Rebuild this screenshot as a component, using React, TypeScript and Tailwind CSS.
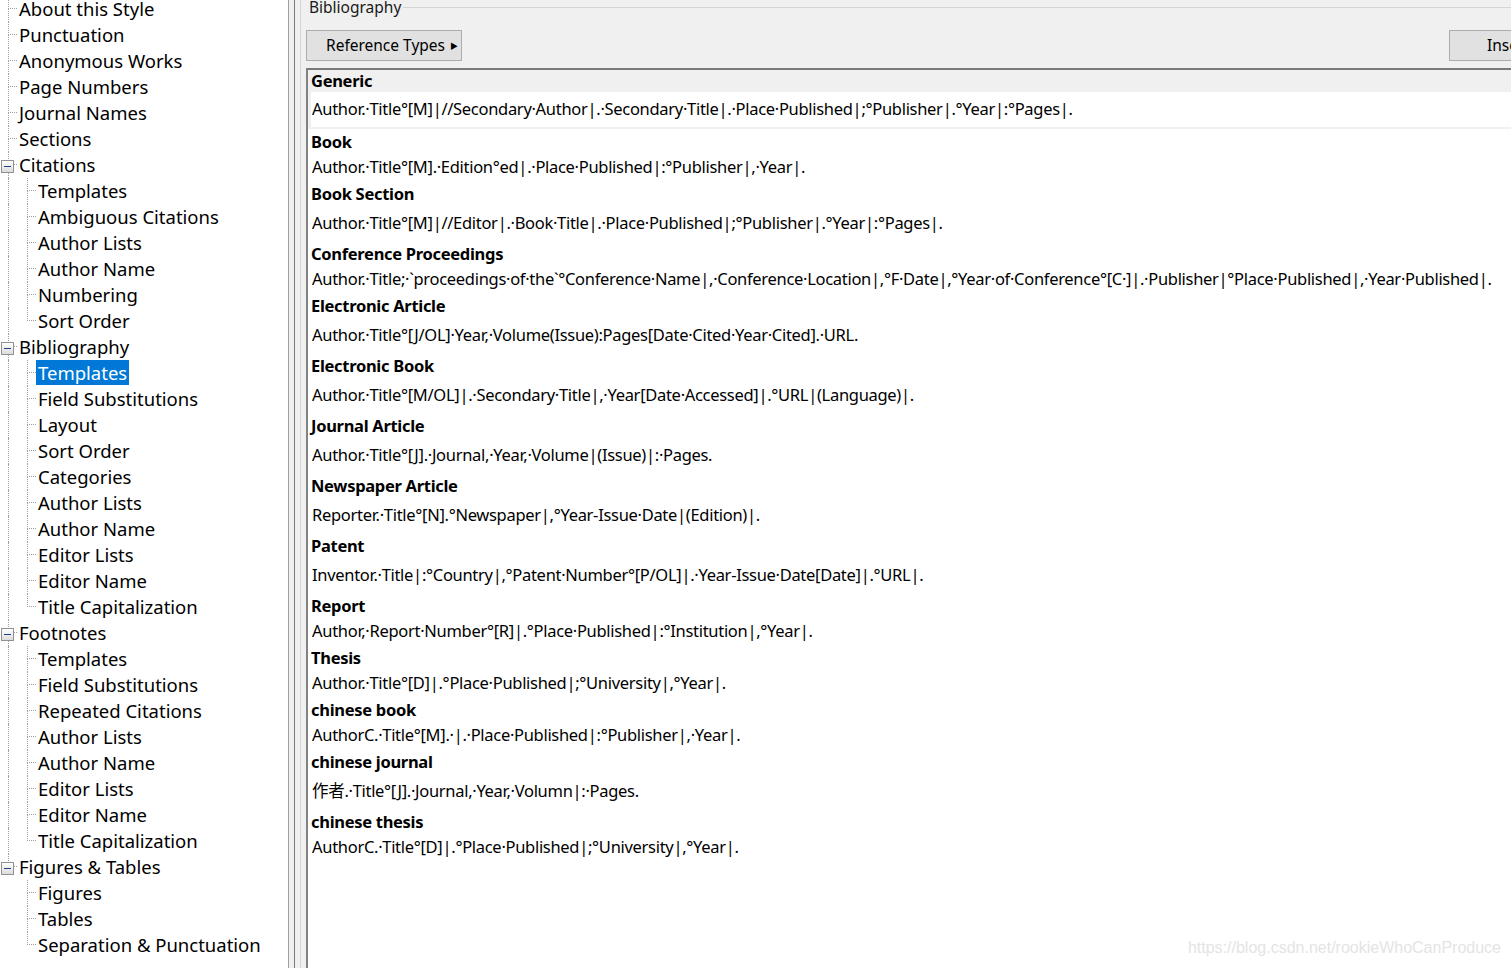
import React from "react";

type Node = { label: string; children?: string[]; selected?: number };

const tree: Node[] = [
  { label: "About this Style" },
  { label: "Punctuation" },
  { label: "Anonymous Works" },
  { label: "Page Numbers" },
  { label: "Journal Names" },
  { label: "Sections" },
  {
    label: "Citations",
    children: ["Templates", "Ambiguous Citations", "Author Lists", "Author Name", "Numbering", "Sort Order"],
  },
  {
    label: "Bibliography",
    selected: 0,
    children: [
      "Templates",
      "Field Substitutions",
      "Layout",
      "Sort Order",
      "Categories",
      "Author Lists",
      "Author Name",
      "Editor Lists",
      "Editor Name",
      "Title Capitalization",
    ],
  },
  {
    label: "Footnotes",
    children: [
      "Templates",
      "Field Substitutions",
      "Repeated Citations",
      "Author Lists",
      "Author Name",
      "Editor Lists",
      "Editor Name",
      "Title Capitalization",
    ],
  },
  { label: "Figures & Tables", children: ["Figures", "Tables", "Separation & Punctuation"] },
];

// tall = 60px entry, otherwise 52px
const templates: { name: string; text: string; tall?: boolean }[] = [
  { name: "Book", text: "Author.·Title°[M].·Edition°ed|.·Place·Published|:°Publisher|,·Year|." },
  {
    name: "Book Section",
    tall: true,
    text: "Author.·Title°[M]|//Editor|.·Book·Title|.·Place·Published|;°Publisher|.°Year|:°Pages|.",
  },
  {
    name: "Conference Proceedings",
    text: "Author.·Title;·`proceedings·of·the`°Conference·Name|,·Conference·Location|,°F·Date|,°Year·of·Conference°[C·]|.·Publisher|°Place·Published|,·Year·Published|.",
  },
  {
    name: "Electronic Article",
    tall: true,
    text: "Author.·Title°[J/OL]·Year,·Volume(Issue):Pages[Date·Cited·Year·Cited].·URL.",
  },
  {
    name: "Electronic Book",
    tall: true,
    text: "Author.·Title°[M/OL]|.·Secondary·Title|,·Year[Date·Accessed]|.°URL|(Language)|.",
  },
  { name: "Journal Article", tall: true, text: "Author.·Title°[J].·Journal,·Year,·Volume|(Issue)|:·Pages." },
  { name: "Newspaper Article", tall: true, text: "Reporter.·Title°[N].°Newspaper|,°Year-Issue·Date|(Edition)|." },
  {
    name: "Patent",
    tall: true,
    text: "Inventor.·Title|:°Country|,°Patent·Number°[P/OL]|.·Year-Issue·Date[Date]|.°URL|.",
  },
  { name: "Report", text: "Author,·Report·Number°[R]|.°Place·Published|:°Institution|,°Year|." },
  { name: "Thesis", text: "Author.·Title°[D]|.°Place·Published|;°University|,°Year|." },
  { name: "chinese book", text: "AuthorC.·Title°[M].·|.·Place·Published|:°Publisher|,·Year|." },
  { name: "chinese journal", tall: true, text: "作者.·Title°[J].·Journal,·Year,·Volumn|:·Pages." },
  { name: "chinese thesis", text: "AuthorC.·Title°[D]|.°Place·Published|;°University|,°Year|." },
];

const dot = "border-dotted border-[#a0a0a0]";

// one connector column: vertical line on its left edge, tee into the label
const Connector = ({ pad, width, last, tee }: { pad: number; width: number; last?: boolean; tee?: boolean }) => (
  <div className="flex h-full shrink-0" style={{ width: pad + width }}>
    <div className="shrink-0" style={{ width: pad }} />
    <div className="flex flex-1 flex-col">
      <div className={`h-[13px] border-l ${dot} ${tee ? "border-b" : ""}`} />
      <div className={`h-[13px] ${last ? "" : `border-l ${dot}`}`} />
    </div>
  </div>
);

const Spacer = ({ w, line }: { w: number; line?: boolean }) => (
  <div className="flex h-full shrink-0" style={{ width: w }}>
    <div className="w-[8px] shrink-0" />
    {line && <div className={`h-full border-l ${dot}`} />}
  </div>
);

const ExpandBox = () => (
  <div className="absolute left-[1px] top-[8px] flex h-[13px] w-[13px] items-center justify-center border border-[#919191] bg-gradient-to-b from-white to-[#dcdcdc]">
    <div className="h-[1px] w-[7px] bg-[#1e3f8a]" />
  </div>
);

const Label = ({ text, selected }: { text: string; selected?: boolean }) => (
  <div
    className={`flex h-[25px] items-center self-start whitespace-nowrap px-[2px] ${
      selected ? "bg-[#0078d7] text-white" : "text-black"
    }`}
  >
    {text}
  </div>
);

const Tree = () => {
  const rows: React.ReactNode[] = [];
  tree.forEach((n, i) => {
    const lastTop = i === tree.length - 1;
    rows.push(
      <div key={`t${i}`} className="relative flex h-[26px]">
        <Connector pad={8} width={9} last={lastTop} tee />
        {n.children && <ExpandBox />}
        <Label text={n.label} />
      </div>
    );
    n.children?.forEach((c, j) => {
      const lastChild = j === n.children!.length - 1;
      rows.push(
        <div key={`t${i}c${j}`} className="flex h-[26px]">
          <Spacer w={17} line={!lastTop} />
          <Connector pad={10} width={9} last={lastChild} tee />
          <Label text={c} selected={n.selected === j} />
        </div>
      );
    });
  });
  return <div className="-mt-[4px] flex flex-col">{rows}</div>;
};

const Entry = ({ name, text, tall }: { name: string; text: string; tall?: boolean }) => (
  <div className="flex flex-col">
    <div className="flex h-[26px] items-center pl-[3px] font-bold">{name}</div>
    <div className={`flex items-center pb-[2px] pl-[4px] ${tall ? "h-[34px]" : "h-[26px]"}`}>{text}</div>
  </div>
);

export default function App() {
  return (
    <div
      className="relative flex h-[968px] w-[1511px] overflow-hidden bg-[#f0f0f0] text-black"
      style={{ fontFamily: '"Noto Sans", "Noto Sans CJK SC", sans-serif' }}
    >
      {/* left tree */}
      <div className="w-[288px] shrink-0 overflow-hidden bg-white text-[18.5px]">
        <Tree />
      </div>

      {/* splitter */}
      <div className="flex shrink-0">
        <div className="w-[1px] bg-[#a0a0a0]" />
        <div className="w-[5px]" />
        <div className="w-[1px] bg-[#7a7a7a]" />
        <div className="w-[5px]" />
        <div className="w-[1px] bg-[#d5d5d5]" />
        <div className="w-[5px]" />
      </div>

      {/* right panel */}
      <div className="flex min-w-0 flex-1 flex-col">
        <div className="relative h-[68px] shrink-0">
          <div className="-mt-[5px] flex items-center">
            <span className="ml-[3px] whitespace-nowrap pr-[2px] text-[15.5px] leading-[24px] text-[#1a1a1a]">
              Bibliography
            </span>
            <div className="h-[1px] flex-1 bg-[#d5d5d5]" />
          </div>
          <div className="mt-[11px] flex items-start">
            <div className="flex h-[31px] w-[156px] items-center whitespace-nowrap border border-[#adadad] bg-[#e1e1e1] pl-[19px] text-[15.5px]">
              Reference Types
              <span className="ml-[5px] text-[8px]">▶</span>
            </div>
            <div className="flex-1" />
            <div className="-mr-[40px] flex h-[31px] w-[102px] items-center whitespace-nowrap border border-[#adadad] bg-[#e1e1e1] pl-[37px] text-[15.5px]">
              Insert
            </div>
          </div>
        </div>

        <div className="min-h-0 flex-1 overflow-hidden whitespace-nowrap border-l-2 border-t-2 border-l-[#828282] border-t-[#7a7a7a] bg-white text-[16.5px] tracking-[-0.3px]">
          {/* focused entry */}
          <div className="flex flex-col bg-[#f0f0f0] pb-[2px]">
            <div className="flex h-[22px] items-center pl-[3px] font-bold">Generic</div>
            <div className="ml-[3px] flex h-[35px] items-center bg-white pl-[1px]">
              Author.·Title°[M]|//Secondary·Author|.·Secondary·Title|.·Place·Published|;°Publisher|.°Year|:°Pages|.
            </div>
          </div>
          {templates.map((t) => (
            <Entry key={t.name} {...t} />
          ))}
        </div>
      </div>

      <div
        className="absolute bottom-[8px] right-[10px] text-[16px] text-[#e4e4e4]"
        style={{ fontFamily: '"Liberation Sans", Arial, sans-serif' }}
      >
        https://blog.csdn.net/rookieWhoCanProduce
      </div>
    </div>
  );
}
